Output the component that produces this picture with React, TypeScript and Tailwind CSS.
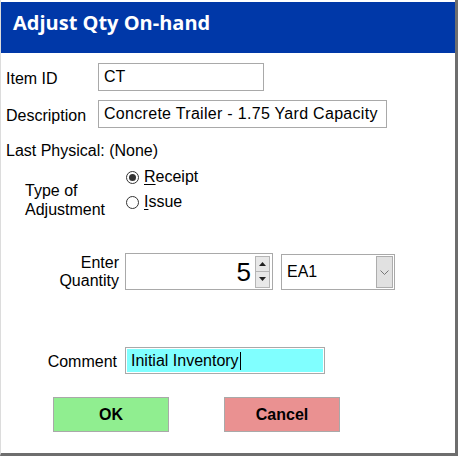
import React from "react";

function Radio({ checked }: { checked: boolean }) {
  return (
    <div className="w-[13px] h-[13px] rounded-full border border-[#333333] bg-white flex items-center justify-center">
      {checked && <div className="w-[7px] h-[7px] rounded-full bg-[#333333]" />}
    </div>
  );
}

export default function App() {
  return (
    <div
      className="w-[458px] h-[456px] bg-white box-border border-l border-l-[#dcdcdc] border-r-[3px] border-r-[#6e6e6e] border-b-[3px] border-b-[#6e6e6e] pt-[2px] flex flex-col text-black"
      style={{ fontFamily: '"Liberation Sans", Arial, sans-serif' }}
    >
      <div
        className="h-[51px] bg-[#0038a8] text-white font-bold text-[20px] pl-[12px] pt-[7px] leading-[28px]"
        style={{ fontFamily: '"Open Sans", "Noto Sans", sans-serif' }}
      >
        Adjust Qty On-hand
      </div>

      <div className="flex items-center mt-[10px] h-[28px]">
        <div className="w-[97px] pl-[5px] pt-[3px] text-[16px]">Item ID</div>
        <div className="w-[166px] h-[28px] border border-[#a9a9a9] flex items-center pl-[5px] text-[16px]">CT</div>
      </div>

      <div className="flex items-center mt-[9px] h-[28px]">
        <div className="w-[97px] pl-[5px] pt-[3px] text-[16px]">Description</div>
        <div className="w-[289px] h-[28px] border border-[#a9a9a9] flex items-center pl-[5px] text-[16px] tracking-[0.3px] whitespace-nowrap">
          Concrete Trailer - 1.75 Yard Capacity
        </div>
      </div>

      <div className="mt-[13px] h-[19px] leading-[19px] pl-[5px] text-[16px]">Last Physical: (None)</div>

      <div className="flex mt-[6px]">
        <div className="w-[125px] pl-[24px] pt-[15px] text-[16px] leading-[19px]">
          Type of
          <br />
          Adjustment
        </div>
        <div className="flex flex-col gap-[5px]">
          <div className="flex items-center h-[20px] gap-[5px] text-[16px] mt-[1px]">
            <Radio checked={true} />
            <span>
              <u className="underline-offset-2">R</u>eceipt
            </span>
          </div>
          <div className="flex items-center h-[20px] gap-[5px] text-[16px]">
            <Radio checked={false} />
            <span>
              <u className="underline-offset-2">I</u>ssue
            </span>
          </div>
        </div>
      </div>

      <div className="flex items-start mt-[34px]">
        <div className="w-[118px] text-right text-[16px] leading-[18px] pt-[1px]">
          Enter
          <br />
          Quantity
        </div>
        <div className="ml-[6px] w-[148px] h-[37px] border border-[#a9a9a9] flex items-center justify-end pr-[2px]">
          <span className="text-[26px] leading-none mr-[4px]">5</span>
          <div className="flex flex-col w-[15px] h-[32px]">
            <div className="h-[16px] bg-[#e8e8e8] border border-[#b5b5b5] flex items-center justify-center">
              <svg width="7" height="4" viewBox="0 0 7 4">
                <path d="M0 4 L3.5 0 L7 4 Z" fill="#222" />
              </svg>
            </div>
            <div className="h-[16px] bg-[#e8e8e8] border border-t-0 border-[#b5b5b5] flex items-center justify-center">
              <svg width="7" height="4" viewBox="0 0 7 4">
                <path d="M0 0 L3.5 4 L7 0 Z" fill="#222" />
              </svg>
            </div>
          </div>
        </div>
        <div className="ml-[8px] mt-[1px] w-[114px] h-[36px] border border-[#a9a9a9] flex items-center justify-between pl-[5px] pr-[1px]">
          <span className="text-[16px]">EA1</span>
          <div className="w-[17px] h-[32px] bg-[#e1e1e1] border border-[#adadad] flex items-center justify-center">
            <svg width="9" height="5" viewBox="0 0 9 5">
              <path d="M0.5 0.5 L4.5 4.5 L8.5 0.5" fill="none" stroke="#777" strokeWidth="1" />
            </svg>
          </div>
        </div>
      </div>

      <div className="flex items-center mt-[57px] h-[27px]">
        <div className="w-[116px] pt-[2px] text-right text-[16px]">Comment</div>
        <div className="ml-[8px] w-[200px] h-[27px] border border-[#a9a9a9] p-[1px]">
          <div className="w-full h-full bg-[#80ffff] flex items-center pl-[4px] text-[16px]">
            Initial Inventory
            <span className="inline-block w-[1px] h-[18px] bg-black ml-[1px]" />
          </div>
        </div>
      </div>

      <div className="flex mt-[23px] h-[35px]">
        <div className="ml-[52px] w-[116px] h-[35px] bg-[#90ee90] border border-[#a9a9a9] flex items-center justify-center font-bold text-[16px]">
          OK
        </div>
        <div className="ml-[55px] w-[116px] h-[35px] bg-[#ea9191] border border-[#a9a9a9] flex items-center justify-center font-bold text-[16px]">
          Cancel
        </div>
      </div>
    </div>
  );
}
